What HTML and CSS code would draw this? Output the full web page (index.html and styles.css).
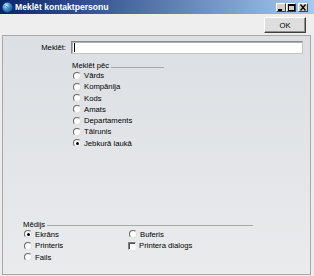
FILE: index.html
```html
<!DOCTYPE html>
<html>
<head>
<meta charset="utf-8">
<link rel="stylesheet" href="styles.css">
</head>
<body>
<div class="window">
  <div class="titlebar">
    <svg class="app-icon" width="11" height="11" viewBox="0 0 11 11">
      <defs>
        <radialGradient id="g" cx="0.35" cy="0.3" r="0.75">
          <stop offset="0" stop-color="#e8f4ff"/>
          <stop offset="0.45" stop-color="#4a9be0"/>
          <stop offset="1" stop-color="#1a4f9c"/>
        </radialGradient>
      </defs>
      <circle cx="5.5" cy="5.5" r="5" fill="url(#g)"/>
      <path d="M2 4 Q4 3 5 5 Q6 7 8.5 6" stroke="#2c7a3a" stroke-width="1" fill="none" opacity="0.7"/>
    </svg>
    <span class="title">Meklēt kontaktpersonu</span>
    <div class="caption-btns">
      <span class="cbtn"><svg width="8" height="7" viewBox="0 0 8 7"><rect x="1" y="5" width="4" height="2" fill="#000"/></svg></span>
      <span class="cbtn"><svg width="8" height="7" viewBox="0 0 8 7"><rect x="1.5" y="0.5" width="6" height="6" fill="none" stroke="#000"/><rect x="1" y="0" width="7" height="2" fill="#000"/></svg></span>
      <span class="cbtn close"><svg width="8" height="7" viewBox="0 0 8 7"><path d="M1.5 0.5 L6.5 6.5 M6.5 0.5 L1.5 6.5" stroke="#000" stroke-width="1.3"/></svg></span>
    </div>
  </div>
  <div class="toolbar">
    <button class="ok-btn">OK</button>
  </div>
  <div class="panel">
    <div class="search-row">
      <span class="search-label">Meklēt:</span>
      <div class="search-input"><span class="caret"></span></div>
    </div>
    <div class="group by-group">
      <div class="group-head"><span>Meklēt pēc</span><span class="rule"></span></div>
      <div class="opt"><span class="radio"></span>Vārds</div>
      <div class="opt"><span class="radio"></span>Kompānija</div>
      <div class="opt"><span class="radio"></span>Kods</div>
      <div class="opt"><span class="radio"></span>Amats</div>
      <div class="opt"><span class="radio"></span>Departaments</div>
      <div class="opt"><span class="radio"></span>Tālrunis</div>
      <div class="opt"><span class="radio checked"></span>Jebkurā laukā</div>
    </div>
    <div class="group media-group">
      <div class="group-head"><span>Mēdijs</span><span class="rule"></span></div>
      <div class="media-grid">
        <div class="opt m"><span class="radio checked"></span>Ekrāns</div>
        <div class="opt m"><span class="radio"></span>Buferis</div>
        <div class="opt m"><span class="radio"></span>Printeris</div>
        <div class="opt m"><span class="check"></span>Printera dialogs</div>
        <div class="opt m"><span class="radio"></span>Fails</div>
      </div>
    </div>
  </div>
</div>
</body>
</html>
```
FILE: styles.css
```css
html, body {
  margin: 0;
  padding: 0;
}
body {
  width: 314px;
  height: 276px;
  overflow: hidden;
  background: #ececec;
  font-family: "Liberation Sans", Arial, sans-serif;
  font-size: 7.7px;
  color: #000;
}
.window {
  display: flex;
  flex-direction: column;
  height: 276px;
}
.titlebar {
  height: 14px;
  flex: none;
  display: flex;
  align-items: center;
  padding-left: 2px;
  background: linear-gradient(to right, #0a246a 0%, #a6caf0 100%);
}
.app-icon {
  flex: none;
  margin-right: 2px;
}
.title {
  flex: 1;
  color: #fff;
  font-weight: bold;
  font-size: 8.6px;
  white-space: nowrap;
}
.caption-btns {
  display: flex;
  align-self: flex-start;
  margin-top: 3px;
  margin-right: 6px;
}
.cbtn {
  width: 10px;
  height: 9px;
  box-sizing: border-box;
  background: #d4d0c8;
  border: 1px solid;
  border-color: #fff #404040 #404040 #fff;
  display: flex;
  align-items: center;
  justify-content: center;
}
.cbtn svg { display: block; }
.cbtn.close { margin-left: 2px; }
.toolbar {
  height: 21px;
  flex: none;
  box-sizing: border-box;
  display: flex;
  justify-content: flex-end;
  align-items: flex-start;
  padding-right: 8px;
  background: #eeeeee;
}
.ok-btn {
  margin-top: 3px;
  width: 42px;
  height: 16px;
  padding: 0;
  box-sizing: border-box;
  background: #dedede;
  border: 1px solid;
  border-color: #fff #404040 #404040 #fff;
  box-shadow: inset -1px -1px 0 #909090;
  font-family: "Liberation Sans", Arial, sans-serif;
  font-size: 7.7px;
  color: #000;
}
.panel {
  flex: 1;
  margin: 0 3px 1px 2px;
  border: 1px solid #a8a8a8;
  background: linear-gradient(#dcdfe3, #e9ebed);
  display: flex;
  flex-direction: column;
  padding: 5px 0 11px 0;
  min-height: 0;
}
.search-row {
  display: flex;
  align-items: center;
  height: 13px;
}
.search-label {
  width: 63px;
  text-align: right;
  margin-right: 5px;
}
.search-input {
  width: 232px;
  height: 13px;
  box-sizing: border-box;
  background: #fff;
  border: 1px solid;
  border-color: #8a8a8a #c4c4c4 #c4c4c4 #8a8a8a;
  box-shadow: inset 1px 1px 0 #b0b0b0;
  display: flex;
  align-items: center;
  padding-left: 2px;
}
.caret {
  width: 1px;
  height: 9px;
  background: #000;
}
.group-head {
  display: flex;
  align-items: center;
  height: 8px;
  line-height: 8px;
  white-space: nowrap;
}
.rule {
  flex: 1;
  height: 1px;
  margin-left: 2px;
  margin-top: 2px;
  background: #a8a8a8;
}
.by-group {
  margin-top: 8px;
  margin-left: 69px;
  width: 92px;
}
.opt {
  height: 11.25px;
  display: flex;
  align-items: center;
  white-space: nowrap;
}
.opt.m { height: 11.5px; }
.radio, .check {
  flex: none;
  width: 8px;
  height: 8px;
  box-sizing: border-box;
  margin-right: 3px;
  background: #fff;
  border: 1px solid;
  border-color: #6a6a6a #e0e0e0 #e0e0e0 #6a6a6a;
  position: relative;
}
.radio {
  border-radius: 50%;
  margin-left: 1px;
}
.radio.checked::after {
  content: "";
  position: absolute;
  left: 1.5px;
  top: 1.5px;
  width: 3px;
  height: 3px;
  border-radius: 50%;
  background: #000;
}
.check {
  border-color: #808080 #f4f4f4 #f4f4f4 #808080;
  box-shadow: inset 1px 1px 0 #505050;
}
.media-group {
  margin-top: auto;
  margin-left: 20px;
  width: 230px;
}
.media-grid {
  display: grid;
  grid-template-columns: 105px 1fr;
}
```
